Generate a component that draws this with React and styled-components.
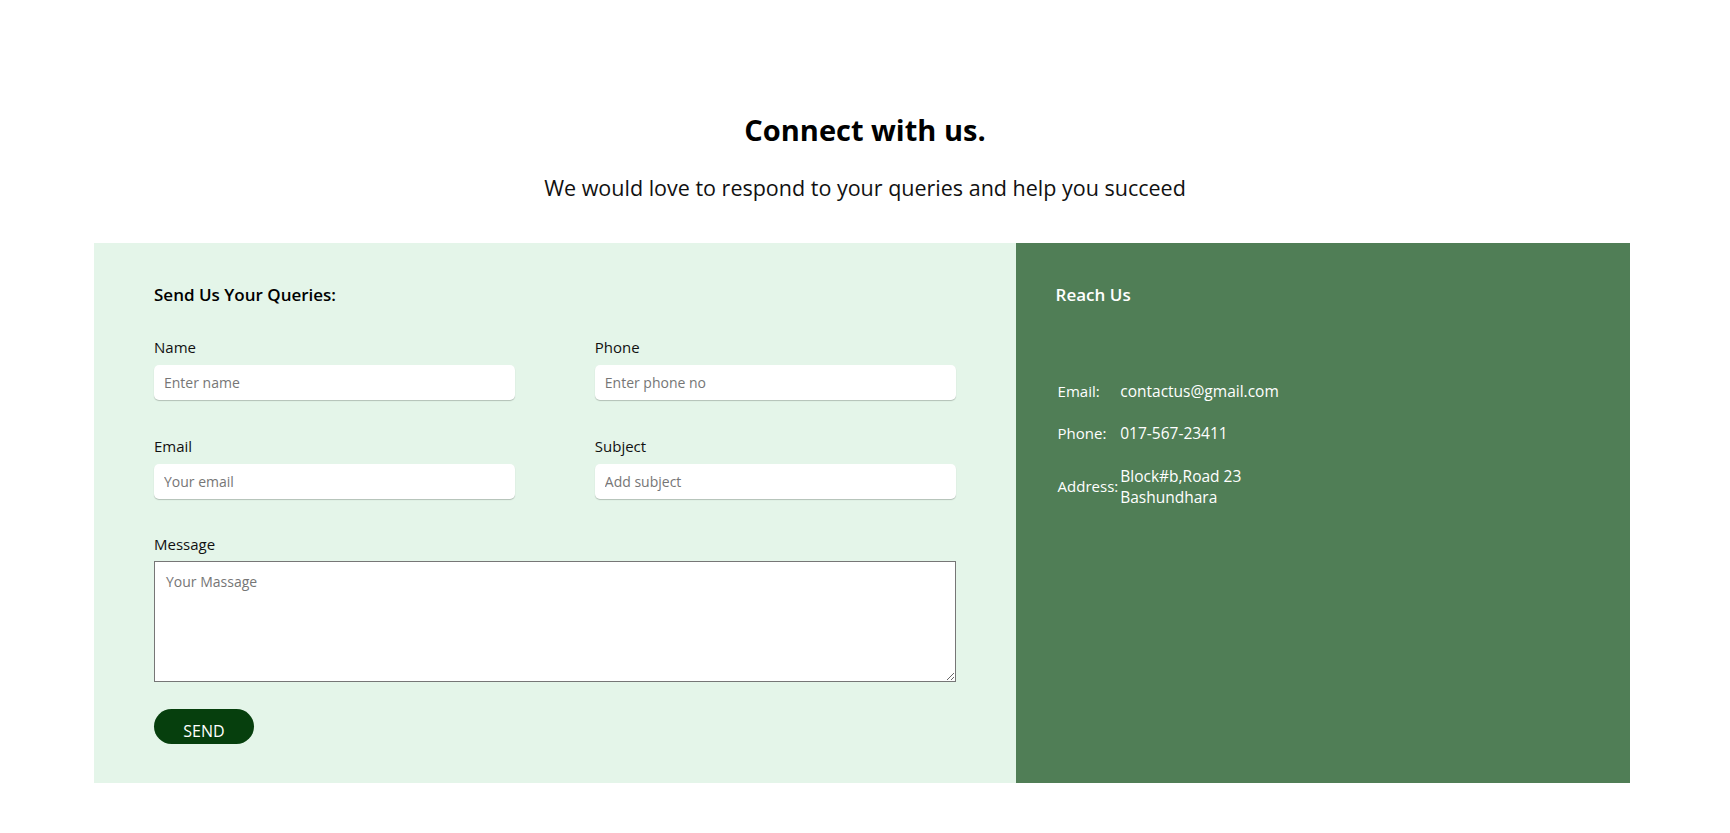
import React from 'react';
import styled, { createGlobalStyle } from 'styled-components';

const GlobalStyle = createGlobalStyle`
    * { box-sizing: border-box; }
    body {
        margin: 0;
        background: #ffffff;
        font-family: "Open Sans", "Liberation Sans", sans-serif;
        color: #000;
    }
`;

const fields = [
    { label: 'Name', placeholder: 'Enter name', type: 'text' },
    { label: 'Phone', placeholder: 'Enter phone no', type: 'tel' },
    { label: 'Email', placeholder: 'Your email', type: 'email' },
    { label: 'Subject', placeholder: 'Add subject', type: 'text' },
];

const contacts = [
    { label: 'Email:', value: ['contactus@gmail.com'] },
    { label: 'Phone:', value: ['017-567-23411'] },
    { label: 'Address:', value: ['Block#b,Road 23', 'Bashundhara'] },
];

export default function App() {
    return (
        <>
            <GlobalStyle />
            <Section>
                <Header>
                    <Title>Connect with us.</Title>
                    <Subtitle>We would love to respond to your queries and help you succeed</Subtitle>
                </Header>

                <Panel>
                    <FormSide>
                        <PanelHeading>Send Us Your Queries:</PanelHeading>
                        <FieldGrid>
                            {fields.map((f) => (
                                <Field key={f.label}>
                                    <Label>{f.label}</Label>
                                    <Input type={f.type} placeholder={f.placeholder} />
                                </Field>
                            ))}
                            <Field wide>
                                <Label tight>Message</Label>
                                <TextArea placeholder="Your Massage" />
                            </Field>
                        </FieldGrid>
                        <SendButton type="button">SEND</SendButton>
                    </FormSide>

                    <InfoSide>
                        <PanelHeading light>Reach Us</PanelHeading>
                        <InfoTable>
                            <tbody>
                                {contacts.map((c) => (
                                    <tr key={c.label}>
                                        <InfoLabel>{c.label}</InfoLabel>
                                        <InfoValue>
                                            {c.value.map((line, i) => (
                                                <div key={i}>{line}</div>
                                            ))}
                                        </InfoValue>
                                    </tr>
                                ))}
                            </tbody>
                        </InfoTable>
                    </InfoSide>
                </Panel>
            </Section>
        </>
    );
}

const Section = styled.section`
    padding: 112px 0 40px;
`;

const Header = styled.header`
    display: flex;
    flex-direction: column;
    align-items: center;
`;

const Title = styled.h1`
    margin: 0;
    font-size: 29px;
    line-height: 36px;
    font-weight: 700;
    color: #000;
`;

const Subtitle = styled.p`
    margin: 25px 0 0;
    font-size: 21.5px;
    line-height: 30px;
    font-weight: 400;
    color: #111;
`;

const Panel = styled.div`
    margin: 40px 0 0 94px;
    width: 1536px;
    display: grid;
    grid-template-columns: 60% 40%;
`;

const FormSide = styled.form`
    background: #e4f5e9;
    padding: 40px 60px 39px;
`;

const InfoSide = styled.div`
    background: #507e56;
    padding: 40px 40px;
    color: #fff;
`;

const PanelHeading = styled.h3`
    margin: 0;
    font-size: 17px;
    line-height: 24px;
    font-weight: 600;
    color: ${(p) => (p.light ? '#ffffff' : '#000000')};
`;

const FieldGrid = styled.div`
    margin-top: 30px;
    display: grid;
    grid-template-columns: 1fr 1fr;
    column-gap: 80px;
    row-gap: 35.5px;
`;

const Field = styled.div`
    display: flex;
    flex-direction: column;
    grid-column: ${(p) => (p.wide ? '1 / -1' : 'auto')};
`;

const Label = styled.label`
    font-size: 15px;
    line-height: 20px;
    color: #111;
    margin-bottom: ${(p) => (p.tight ? '7px' : '8px')};
`;

const Input = styled.input`
    height: 35px;
    border: none;
    border-radius: 5px;
    background: #fff;
    padding: 0 10px;
    font-family: inherit;
    font-size: 14px;
    box-shadow: 0 1px 1px rgba(0, 0, 0, 0.22);
    outline: none;

    &::placeholder {
        color: #767676;
    }
`;

const TextArea = styled.textarea`
    height: 121px;
    border: 1px solid #767676;
    padding: 10px 11px;
    font-family: inherit;
    font-size: 14px;
    background: #fff;
    outline: none;

    &::placeholder {
        color: #767676;
    }
`;

const SendButton = styled.button`
    margin-top: 27px;
    width: 100px;
    height: 35px;
    border: none;
    border-radius: 18px;
    background: #063f0d;
    color: #fff;
    font-family: inherit;
    font-size: 16px;
    padding: 9px 0 0;
    display: flex;
    align-items: center;
    justify-content: center;
    cursor: pointer;
`;

const InfoTable = styled.table`
    margin-top: 62px;
    border-spacing: 2px;
    line-height: 21.5px;
`;

const InfoLabel = styled.td`
    padding: 9.5px 0;
    font-size: 15px;
    vertical-align: middle;
    white-space: nowrap;
`;

const InfoValue = styled.td`
    padding: 9.5px 0;
    font-size: 15.5px;
    vertical-align: middle;
`;
